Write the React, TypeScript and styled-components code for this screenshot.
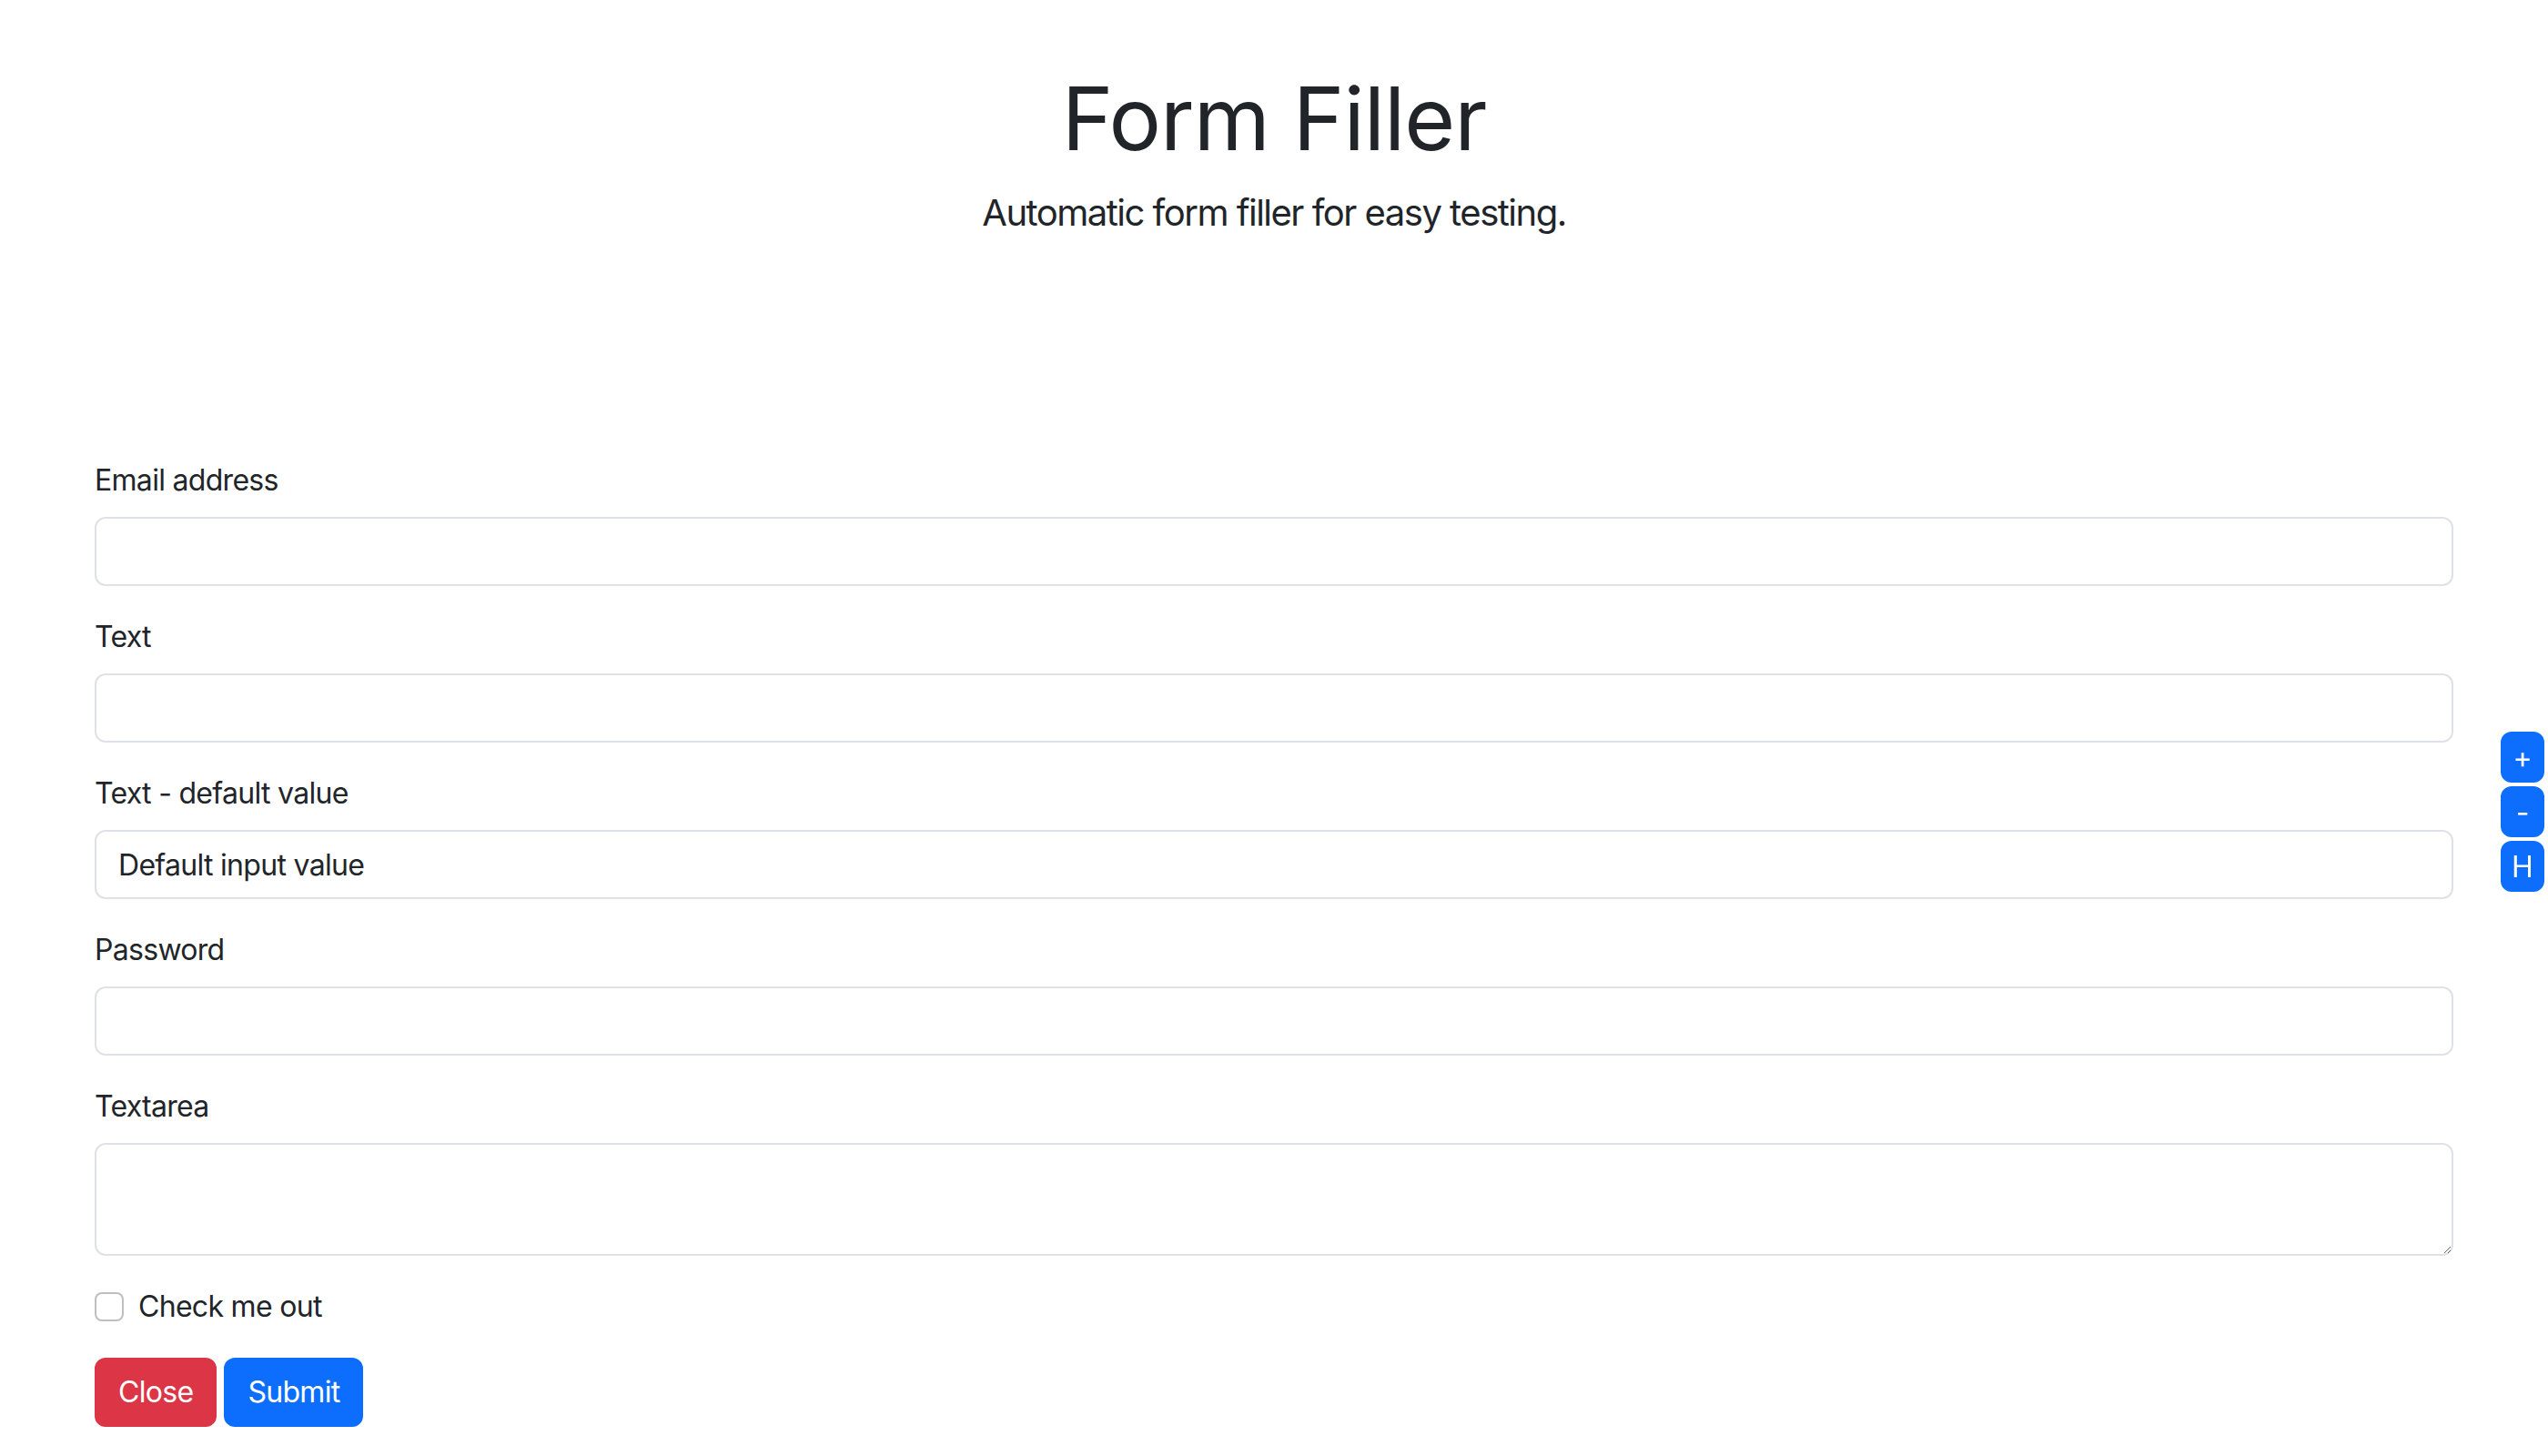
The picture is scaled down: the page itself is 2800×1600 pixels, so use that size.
import React from "react";
import styled, { createGlobalStyle } from "styled-components";

const GlobalStyle = createGlobalStyle`
  body {
    margin: 0;
    background: #ffffff;
    color: #212529;
    font-family: Inter, "Noto Sans", "Liberation Sans", sans-serif;
    font-size: 32px;
    line-height: 1.5;
    letter-spacing: -0.7px;
  }
  * {
    box-sizing: border-box;
  }
`;

const Page = styled.div`
  min-height: 1600px;
`;

const Header = styled.header`
  text-align: center;
  padding-top: 73px;
`;

const Title = styled.h1`
  margin: 0 0 16px;
  font-size: 96px;
  font-weight: 400;
  line-height: 1.2;
  letter-spacing: -1px;
`;

const Lead = styled.p`
  margin: 0;
  font-size: 40px;
  line-height: 1.5;
  letter-spacing: -1.5px;
`;

const Container = styled.main`
  max-width: 2640px;
  margin: 240px auto 0;
  padding: 0 24px;
`;

const Group = styled.div`
  margin-bottom: 32px;
`;

const Label = styled.label`
  display: block;
  margin-bottom: 16px;
`;

const Input = styled.input`
  display: block;
  width: 100%;
  height: 76px;
  padding: 12px 24px;
  font: inherit;
  letter-spacing: inherit;
  color: #212529;
  background: #fff;
  border: 2px solid #dee2e6;
  border-radius: 12px;
  outline: none;
`;

const TextArea = styled.textarea`
  display: block;
  width: 100%;
  height: 124px;
  padding: 12px 24px;
  font: inherit;
  color: #212529;
  background: #fff;
  border: 2px solid #dee2e6;
  border-radius: 12px;
  outline: none;
  resize: vertical;
`;

const CheckRow = styled.div`
  display: flex;
  align-items: center;
  gap: 16px;
  height: 48px;
  margin-bottom: 32px;
`;

const Checkbox = styled.input`
  appearance: none;
  width: 32px;
  height: 32px;
  margin: 0;
  border: 2px solid rgba(0, 0, 0, 0.25);
  border-radius: 8px;
  background: #fff;
`;

const CheckLabel = styled.label``;

const Actions = styled.div`
  display: flex;
  gap: 8px;
`;

const Button = styled.button<{ $variant: "danger" | "primary" }>`
  height: 76px;
  padding: 12px 24px;
  font: inherit;
  letter-spacing: inherit;
  line-height: 48px;
  color: #fff;
  border: 2px solid ${(p) => (p.$variant === "danger" ? "#dc3545" : "#0d6efd")};
  background: ${(p) => (p.$variant === "danger" ? "#dc3545" : "#0d6efd")};
  border-radius: 12px;
`;

const SideTools = styled.div`
  position: fixed;
  right: 4px;
  top: 804px;
  display: flex;
  flex-direction: column;
  gap: 4px;
`;

const ToolButton = styled.button`
  width: 48px;
  height: 56px;
  padding: 0;
  display: flex;
  align-items: center;
  justify-content: center;
  font-family: Inter, "Liberation Sans", sans-serif;
  font-size: 32px;
  color: #fff;
  background: #0d6efd;
  border: none;
  border-radius: 12px;
`;

export default function App() {
  return (
    <Page>
      <GlobalStyle />
      <Header>
        <Title>Form Filler</Title>
        <Lead>Automatic form filler for easy testing.</Lead>
      </Header>
      <Container>
        <form onSubmit={(e) => e.preventDefault()}>
          <Group>
            <Label htmlFor="email">Email address</Label>
            <Input id="email" type="email" />
          </Group>
          <Group>
            <Label htmlFor="text">Text</Label>
            <Input id="text" type="text" />
          </Group>
          <Group>
            <Label htmlFor="textDefault">Text - default value</Label>
            <Input id="textDefault" type="text" defaultValue="Default input value" />
          </Group>
          <Group>
            <Label htmlFor="password">Password</Label>
            <Input id="password" type="password" />
          </Group>
          <Group>
            <Label htmlFor="textarea">Textarea</Label>
            <TextArea id="textarea" />
          </Group>
          <CheckRow>
            <Checkbox id="check" type="checkbox" />
            <CheckLabel htmlFor="check">Check me out</CheckLabel>
          </CheckRow>
          <Actions>
            <Button type="button" $variant="danger">
              Close
            </Button>
            <Button type="submit" $variant="primary">
              Submit
            </Button>
          </Actions>
        </form>
      </Container>
      <SideTools>
        <ToolButton>+</ToolButton>
        <ToolButton>-</ToolButton>
        <ToolButton>H</ToolButton>
      </SideTools>
    </Page>
  );
}
